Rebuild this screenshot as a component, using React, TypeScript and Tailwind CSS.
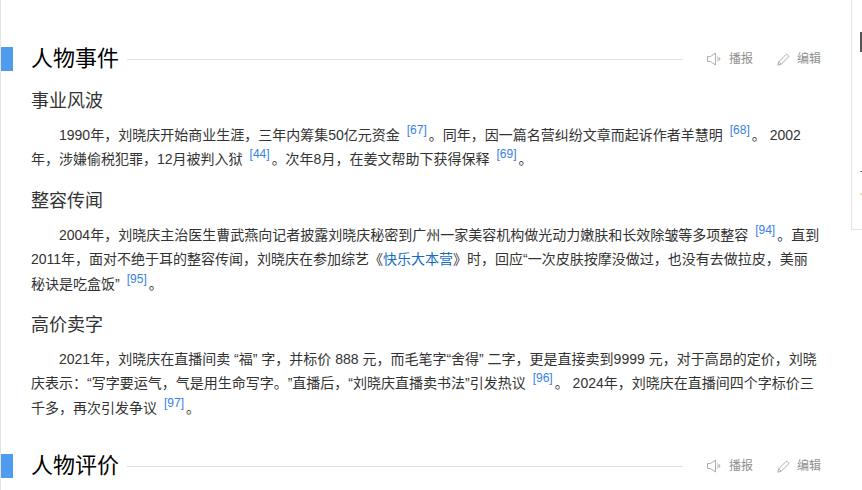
const fontStack = '"Liberation Sans", "Noto Sans CJK SC", sans-serif';

function Ref({ n }: { n: number }) {
  return <sup className="ml-[7px] mr-[2px] text-[12px] leading-none text-[#3681e6]">[{n}]</sup>;
}

function SpeakerIcon() {
  return (
    <svg width="15" height="14" viewBox="0 0 15 14" fill="none" stroke="#adadad" strokeWidth="1">
      <path d="M.5 4.5h3L8.5 1v12l-5-3.5h-3z" />
      <path d="M10.5 4.5c.8 1.5.8 3.5 0 5" />
      <path d="M12.5 5.5c.4 1 .4 2 0 3" />
    </svg>
  );
}

function PencilIcon() {
  return (
    <svg width="13" height="13" viewBox="0 0 13 13" fill="none" stroke="#adadad" strokeWidth="1">
      <path d="M.8 12.2l.9-3.4L8.9 1.6a1.2 1.2 0 0 1 1.7 0l.8.8a1.2 1.2 0 0 1 0 1.7L4.2 11.3z" />
      <path d="M1.7 8.8l2.5 2.5" />
    </svg>
  );
}

function SectionTitle({ title }: { title: string }) {
  return (
    <div className="flex h-6 items-center">
      <div className="h-6 w-3 shrink-0 bg-[#4f9cee]" />
      <h2 className="ml-[18px] text-[22px] leading-6 font-normal text-black">{title}</h2>
      <div className="ml-2 h-px w-[556px] bg-[#e0e0e0]" />
      <div className="ml-6 flex items-center gap-6 text-[12px] text-[#8f8f8f]">
        <span className="flex items-center gap-[7px]">
          <SpeakerIcon />
          播报
        </span>
        <span className="flex items-center gap-[7px]">
          <PencilIcon />
          编辑
        </span>
      </div>
    </div>
  );
}

function Para({ children }: { children: React.ReactNode }) {
  return (
    <p className="w-[790px] text-[14px] leading-[24.4px] text-[#333] indent-[28px] [text-spacing-trim:space-all]">
      {children}
    </p>
  );
}

function Block({ title, children }: { title: string; children: React.ReactNode }) {
  return (
    <div className="flex flex-col gap-[10px]">
      <h3 className="text-[18px] leading-6 font-normal text-[#333]">{title}</h3>
      <Para>{children}</Para>
    </div>
  );
}

export default function App() {
  return (
    <div
      className="relative h-[490px] w-[862px] overflow-hidden bg-white"
      style={{ fontFamily: fontStack }}
    >
      <div className="flex h-full flex-col gap-[34px] border-l border-[#e4e4e4] pt-[47px]">
        <div className="flex flex-col gap-[18px]">
          <SectionTitle title="人物事件" />
          <div className="flex flex-col gap-[17px] pl-[30px]">
            <Block title="事业风波">
              1990年，刘晓庆开始商业生涯，三年内筹集50亿元资金
              <Ref n={67} />
              。同年，因一篇名营纠纷文章而起诉作者羊慧明
              <Ref n={68} />
              。 2002年，涉嫌偷税犯罪，12月被判入狱
              <Ref n={44} />
              。次年8月，在姜文帮助下获得保释
              <Ref n={69} />。
            </Block>
            <Block title="整容传闻">
              2004年，刘晓庆主治医生曹武燕向记者披露刘晓庆秘密到广州一家美容机构做光动力嫩肤和长效除皱等多项整容
              <Ref n={94} />
              。直到2011年，面对不绝于耳的整容传闻，刘晓庆在参加综艺《<span className="text-[#136ec2]">快乐大本营</span>
              》时，回应“一次皮肤按摩没做过，也没有去做拉皮，美丽秘诀是吃盒饭”
              <Ref n={95} />。
            </Block>
            <Block title="高价卖字">
              2021年，刘晓庆在直播间卖 “福” 字，并标价 888 元，而毛笔字“舍得” 二字，更是直接卖到9999 元，对于高昂的定价，刘晓庆表示：“写字要运气，气是用生命写字。”直播后，“刘晓庆直播卖书法”引发热议
              <Ref n={96} />
              。 2024年，刘晓庆在直播间四个字标价三千多，再次引发争议
              <Ref n={97} />。
            </Block>
          </div>
        </div>
        <SectionTitle title="人物评价" />
      </div>

      {/* side panel peeking in on the right */}
      <div className="absolute top-0 left-[851px] flex h-[230px] w-[11px] flex-col items-end border-b border-l border-[#e4e4e4] bg-white pt-[32px]">
        <div className="h-5 w-[2px] bg-[#555]" />
        <div className="mt-[119px] h-px w-[2px] bg-[#9a7a60]" />
        <div className="mt-[21px] h-[2px] w-[2px] bg-[#f3dcb8]" />
      </div>
    </div>
  );
}
